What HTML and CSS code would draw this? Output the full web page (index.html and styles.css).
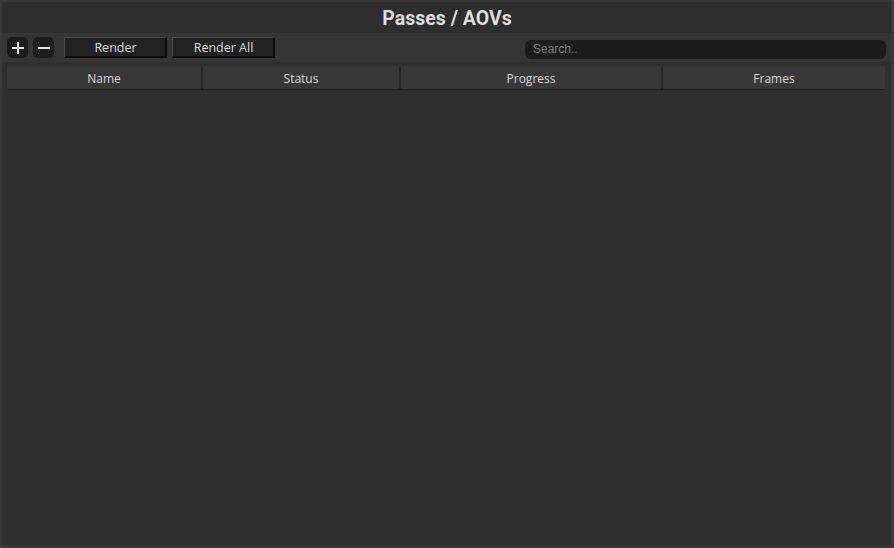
FILE: index.html
```html
<!DOCTYPE html>
<html>
<head>
<meta charset="utf-8">
<link rel="stylesheet" href="styles.css">
</head>
<body>
<div class="app">
  <div class="title">Passes / AOVs</div>
  <div class="toolbar">
    <button class="icon-btn" aria-label="Add">
      <svg width="14" height="14" viewBox="0 0 14 14"><path d="M7 1v12M1 7h12" stroke="#e6e6e6" stroke-width="2" fill="none"/></svg>
    </button>
    <button class="icon-btn" aria-label="Remove">
      <svg width="14" height="14" viewBox="0 0 14 14"><path d="M1 7h12" stroke="#e6e6e6" stroke-width="2" fill="none"/></svg>
    </button>
    <button class="btn btn-first">Render</button>
    <button class="btn">Render All</button>
    <div class="spacer"></div>
    <input class="search" type="text" placeholder="Search..">
  </div>
  <div class="table">
    <div class="thead">
      <div class="th c1">Name</div>
      <div class="th c2">Status</div>
      <div class="th c3">Progress</div>
      <div class="th c4">Frames</div>
    </div>
    <div class="tbody"></div>
  </div>
</div>
</body>
</html>
```
FILE: styles.css
```css
html, body {
  margin: 0;
  padding: 0;
  background: #2f2f2f;
}
.app {
  width: 894px;
  height: 548px;
  box-sizing: border-box;
  border-top: 2px solid #393939;
  border-left: 2px solid #393939;
  border-right: 3px solid #3a3a3a;
  border-bottom: 3px solid #3a3a3a;
  background: #2f2f2f;
  display: flex;
  flex-direction: column;
  font-family: "Open Sans", "Noto Sans", sans-serif;
}
.title {
  height: 31px;
  box-sizing: border-box;
  padding-top: 2px;
  display: flex;
  align-items: center;
  justify-content: center;
  font-family: Roboto, "Noto Sans", sans-serif;
  font-weight: bold;
  font-size: 19.5px;
  color: #dedede;
  background: #2e2e2e;
  padding-left: 1px;
}
.toolbar {
  height: 29px;
  background: #353535;
  display: flex;
  align-items: center;
  padding: 0 5px 0 5px;
}
.icon-btn {
  width: 21px;
  height: 21px;
  margin-right: 5px;
  padding: 0;
  border: none;
  border-radius: 5px;
  background: #1c1c1c;
  display: flex;
  align-items: center;
  justify-content: center;
}
.btn {
  height: 21px;
  width: 103px;
  box-sizing: border-box;
  padding: 0 0 0 1px;
  margin-right: 5px;
  background: #222222;
  color: #dcdcdc;
  font-family: "Open Sans", "Noto Sans", sans-serif;
  font-size: 12.5px;
  border-top: 1px solid #4a4a4a;
  border-left: 1px solid #4a4a4a;
  border-right: 2px solid #0c0c0c;
  border-bottom: 2px solid #0c0c0c;
}
.btn-first {
  margin-left: 5px;
}
.spacer {
  flex: 1;
}
.search {
  width: 361px;
  height: 19px;
  box-sizing: border-box;
  border: none;
  border-radius: 6px;
  background: #1c1c1c;
  color: #cccccc;
  font-family: "Liberation Sans", Arial, sans-serif;
  font-size: 12px;
  padding: 0 8px;
  margin-top: 3px;
  outline: none;
}
.search::placeholder {
  color: #7a7a7a;
}
.table {
  flex: 1;
  display: flex;
  flex-direction: column;
  padding: 4px 6px 0 5px;
}
.thead {
  display: flex;
  height: 24px;
  box-sizing: border-box;
  background: #383838;
  border-bottom: 1px solid #1e1e1e;
}
.th {
  display: flex;
  align-items: center;
  justify-content: center;
  color: #dadada;
  font-size: 12px;
  padding-top: 2px;
  box-sizing: border-box;
  border-right: 2px solid #262626;
}
.c1 { width: 196px; }
.c2 { width: 198px; }
.c3 { width: 262px; }
.c4 { flex: 1; border-right: none; }
.tbody {
  flex: 1;
}
```
